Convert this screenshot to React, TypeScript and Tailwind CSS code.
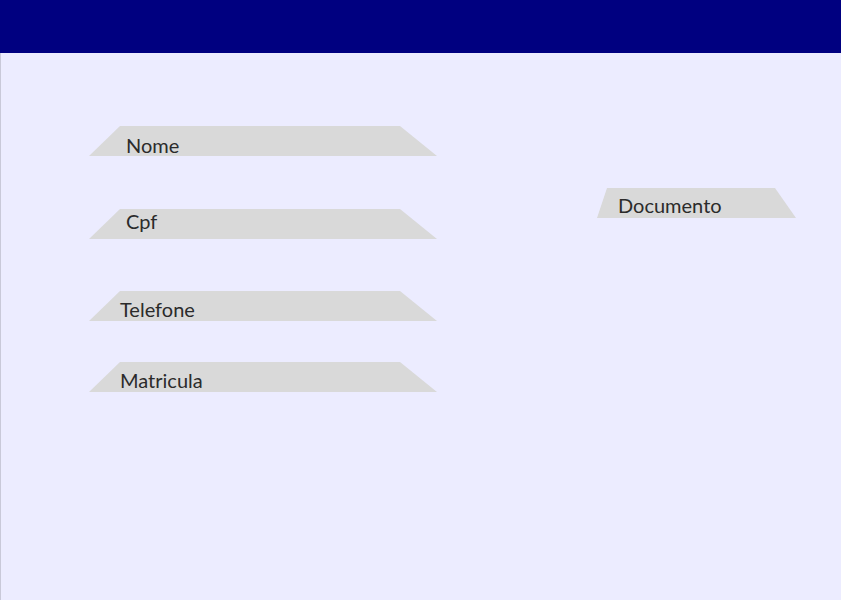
const font = { fontFamily: "Lato, 'Noto Sans', sans-serif" };

type FieldProps = { label: string; padLeft: string; padTop: string; className?: string };

function Field({ label, padLeft, padTop, className }: FieldProps) {
  return (
    <div
      className={`w-[348px] h-[30px] bg-[#d9d9d9] [clip-path:polygon(31px_0,311px_0,100%_100%,0_100%)] ${className ?? ""}`}
    >
      <div className={`${padLeft} ${padTop} text-[20px] leading-[20px] text-[#2b2b2b]`}>{label}</div>
    </div>
  );
}

export default function App() {
  return (
    <div className="w-[841px] h-[600px] flex flex-col bg-[#ececff]" style={font}>
      <header className="h-[53px] bg-[#000080] shrink-0" />
      <main className="flex-1 flex border-l border-[#c9c9d9]">
        <div className="ml-[88px] flex flex-col">
          <Field label="Nome" padLeft="pl-[37px]" padTop="pt-[9px]" className="mt-[73px]" />
          <Field label="Cpf" padLeft="pl-[37px]" padTop="pt-[2px]" className="mt-[53px]" />
          <Field label="Telefone" padLeft="pl-[31px]" padTop="pt-[8px]" className="mt-[52px]" />
          <Field label="Matricula" padLeft="pl-[31px]" padTop="pt-[8px]" className="mt-[41px]" />
        </div>
        <div className="ml-[160px] mt-[135px]">
          <div className="w-[199px] h-[30px] bg-[#d9d9d9] [clip-path:polygon(10px_0,178px_0,100%_100%,0_100%)]">
            <div className="pl-[21px] pt-[7px] text-[20px] leading-[20px] text-[#2b2b2b]">Documento</div>
          </div>
        </div>
      </main>
    </div>
  );
}
